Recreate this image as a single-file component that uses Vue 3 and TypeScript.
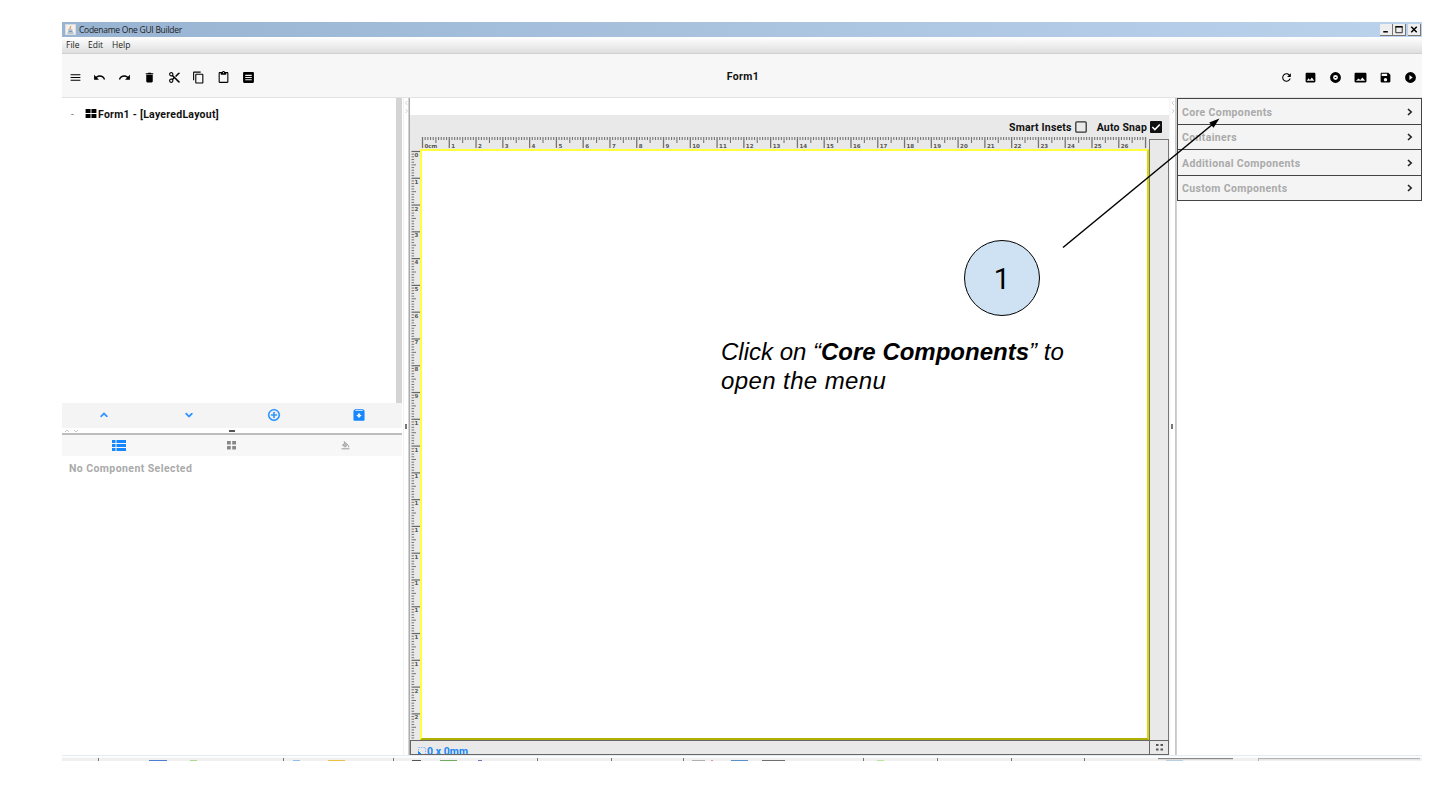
<script setup lang="ts">
interface Tick {
  pos: number
  len: number
  major: boolean
}

const STEP = 26.78

function ticks(limit: number, minor: number, half: number, major: number): Tick[] {
  const list: Tick[] = []
  for (let i = 0; (i * STEP) / 10 <= limit; i++) {
    const len = i % 10 === 0 ? major : i % 5 === 0 ? half : minor
    list.push({ pos: (i * STEP) / 10, len, major: i % 10 === 0 })
  }
  return list
}

const hTicks = ticks(724, 3, 6, 11)
const vTicks = ticks(587, 2.6, 4.5, 8.5)
const hLabels = Array.from({ length: 27 }, (_, i) => ({ x: i * STEP, text: i === 0 ? '0cm' : String(i) }))
const vLabels = Array.from({ length: 22 }, (_, i) => ({ y: i * STEP, text: String(i).charAt(0) }))

const leftIcons: string[] = [
  'M3 18h18v-2H3v2zm0-5h18v-2H3v2zm0-7v2h18V6H3z',
  'M12.5 8c-2.65 0-5.05.99-6.9 2.6L2 7v9h9l-3.62-3.62c1.39-1.16 3.16-1.88 5.12-1.88 3.54 0 6.55 2.31 7.6 5.5l2.37-.78C21.08 11.03 17.15 8 12.5 8z',
  'M18.4 10.6C16.55 8.99 14.15 8 11.5 8c-4.65 0-8.58 3.03-9.96 7.22L3.9 16c1.05-3.19 4.05-5.5 7.6-5.5 1.95 0 3.73.72 5.12 1.88L13 16h9V7l-3.6 3.6z',
  'M6 19c0 1.1.9 2 2 2h8c1.1 0 2-.9 2-2V7H6v12zM19 4h-3.5l-1-1h-5l-1 1H5v2h14V4z',
  'M9.64 7.64c.23-.5.36-1.05.36-1.64 0-2.21-1.79-4-4-4S2 3.79 2 6s1.79 4 4 4c.59 0 1.14-.13 1.64-.36L10 12l-2.36 2.36C7.14 14.13 6.59 14 6 14c-2.21 0-4 1.79-4 4s1.79 4 4 4 4-1.79 4-4c0-.59-.13-1.14-.36-1.64L12 14l7 7h3v-1L9.64 7.64zM6 8c-1.1 0-2-.89-2-2s.9-2 2-2 2 .89 2 2-.9 2-2 2zm0 12c-1.1 0-2-.89-2-2s.9-2 2-2 2 .89 2 2-.9 2-2 2zM19 3l-6 6 2 2 7-7V3z',
  'M16 1H4c-1.1 0-2 .9-2 2v14h2V3h12V1zm3 4H8c-1.1 0-2 .9-2 2v14c0 1.1.9 2 2 2h11c1.1 0 2-.9 2-2V7c0-1.1-.9-2-2-2zm0 16H8V7h11v14z',
  'M19 2h-4.18C14.4.84 13.3 0 12 0c-1.3 0-2.4.84-2.82 2H5c-1.1 0-2 .9-2 2v16c0 1.1.9 2 2 2h14c1.1 0 2-.9 2-2V4c0-1.1-.9-2-2-2zm-7 0c.55 0 1 .45 1 1s-.45 1-1 1-1-.45-1-1 .45-1 1-1zm7 18H5V4h2v3h10V4h2v16z',
  'M4 2h16c1.1 0 2 .9 2 2v16c0 1.1-.9 2-2 2H4c-1.1 0-2-.9-2-2V4c0-1.1.9-2 2-2zm2 5v2h12V7zm0 4v2h12v-2zm0 4v2h12v-2z',
]

const rightIcons: string[] = [
  'M17.65 6.35C16.2 4.9 14.21 4 12 4c-4.42 0-7.99 3.58-7.99 8s3.57 8 7.99 8c3.73 0 6.84-2.55 7.73-6h-2.08c-.82 2.33-3.04 4-5.65 4-3.31 0-6-2.69-6-6s2.69-6 6-6c1.66 0 3.14.69 4.22 1.78L13 11h7V4l-2.35 2.35z',
  'M21 19V5c0-1.1-.9-2-2-2H5c-1.1 0-2 .9-2 2v14c0 1.1.9 2 2 2h14c1.1 0 2-.9 2-2zM8.5 13.5l2.5 3.01L14.5 12l4.5 6H5l3.5-4.5z',
  'M12 2a10 10 0 1 0 0 20 10 10 0 0 0 0-20zm0 5.500a4.500 4.500 0 1 1 0 9 4.500 4.500 0 0 1 0-9zm-1.500 3.700v1.600h3v-1.600z',
  'M23 19V5c0-1.1-.9-2-2-2H3c-1.1 0-2 .9-2 2v14c0 1.1.9 2 2 2h18c1.1 0 2-.9 2-2zM8.5 14l3 2.5L15.500 12l5 6h-17z',
  'M17 3H5c-1.11 0-2 .9-2 2v14c0 1.1.89 2 2 2h14c1.1 0 2-.9 2-2V7l-4-4zm-5 16c-1.66 0-3-1.34-3-3s1.34-3 3-3 3 1.34 3 3-1.34 3-3 3zm3-10H5V5h10v4z',
  'M12 2a10 10 0 1 0 0 20 10 10 0 0 0 0-20zm-2 14.500v-9l6 4.500-6 4.500z',
]

const sections: string[] = ['Core Components', 'Containers', 'Additional Components', 'Custom Components']

interface Mark {
  x: number
  w: number
  color: string
}

const taskMarks: Mark[] = [
  { x: 36, w: 1, color: '#777' },
  { x: 87, w: 18, color: '#4d7fd0' },
  { x: 128, w: 7, color: '#a9dc93' },
  { x: 221, w: 1, color: '#777' },
  { x: 231, w: 7, color: '#92bdf0' },
  { x: 266, w: 17, color: '#ecc04a' },
  { x: 331, w: 1, color: '#777' },
  { x: 350, w: 9, color: '#555' },
  { x: 378, w: 17, color: '#6cae5c' },
  { x: 416, w: 4, color: '#7477aa' },
  { x: 475, w: 1, color: '#777' },
  { x: 549, w: 1, color: '#777' },
  { x: 621, w: 1, color: '#777' },
  { x: 630, w: 13, color: '#b0b0b0' },
  { x: 649, w: 2, color: '#d99' },
  { x: 669, w: 17, color: '#5a8fca' },
  { x: 700, w: 23, color: '#707070' },
  { x: 801, w: 1, color: '#777' },
  { x: 815, w: 7, color: '#b9e39a' },
  { x: 875, w: 1, color: '#777' },
  { x: 949, w: 1, color: '#777' },
  { x: 1022, w: 1, color: '#777' },
]
</script>

<template>
  <div class="page">
    <div class="window">
      <header class="titlebar">
        <svg class="app-icon" viewBox="0 0 11 11">
          <rect x=".5" y=".5" width="10" height="10" fill="#f3f1ec" stroke="#d8dce0" />
          <path d="M5.500 2c1 1-1.500 1.500-.2 3" stroke="#e07a2a" fill="none" />
          <path d="M3 6h4.500M3.500 7.500h4M2.500 9h6" stroke="#5e83a8" fill="none" stroke-width=".8" />
        </svg>
        <span class="title">Codename One GUI Builder</span>
        <div class="win-buttons">
          <span class="win-btn"><svg viewBox="0 0 12 12"><path d="M3 8.500h5" stroke="#000" stroke-width="1.600" /></svg></span>
          <span class="win-btn"><svg viewBox="0 0 12 12"><path d="M2.500 3h7v6.500h-7z" fill="none" stroke="#222" /><path d="M2 3h8" stroke="#000" stroke-width="1.500" /></svg></span>
          <span class="win-btn last"><svg viewBox="0 0 12 12"><path d="M3 3l6 6M9 3l-6 6" stroke="#000" stroke-width="1.600" /></svg></span>
        </div>
      </header>
      <nav class="menubar">
        <span class="m-file">File</span><span class="m-edit">Edit</span><span>Help</span>
      </nav>
      <div class="toolbar">
        <div class="icons">
          <svg v-for="(d, i) in leftIcons" :key="i" viewBox="0 0 24 24"><path :d="d" fill-rule="evenodd" /></svg>
        </div>
        <strong class="form-title">Form1</strong>
        <div class="icons right">
          <svg v-for="(d, i) in rightIcons" :key="i" viewBox="0 0 24 24"><path :d="d" fill-rule="evenodd" /></svg>
        </div>
      </div>

      <main class="body">
        <aside class="left">
          <div class="tree">
            <div class="node">
              <span class="dash">-</span>
              <svg class="grid-icon" viewBox="0 0 12 10"><path d="M0 0h5.500v4.500H0zM6.500 0H12v4.500H6.500zM0 5.500h5.500V10H0zM6.500 5.500H12V10H6.500z" /></svg>
              <span class="node-text">Form1 - [LayeredLayout]</span>
            </div>
            <div class="scroll"></div>
          </div>
          <div class="actions">
            <svg viewBox="0 0 24 24"><path d="M12 8l-6 6 1.410 1.410L12 10.830l4.590 4.580L18 14z" stroke="#1587ff" stroke-width="1.200" /></svg>
            <svg viewBox="0 0 24 24"><path d="M16.590 8.590L12 13.170 7.410 8.590 6 10l6 6 6-6z" stroke="#1587ff" stroke-width="1.200" /></svg>
            <svg viewBox="0 0 24 24"><path d="M13 7h-2v4H7v2h4v4h2v-4h4v-2h-4V7zm-1-5C6.480 2 2 6.480 2 12s4.480 10 10 10 10-4.480 10-10S17.520 2 12 2zm0 18c-4.410 0-8-3.590-8-8s3.590-8 8-8 8 3.590 8 8-3.590 8-8 8z" stroke="#1587ff" stroke-width=".5" /></svg>
            <svg viewBox="0 0 24 24"><path fill-rule="evenodd" d="M5 2h14l2.500 2.500V20c0 1.100-.9 2-2 2h-15c-1.100 0-2-.9-2-2V4.500zM5.500 4v1h13V4zM10 9.500v2.700H7.200l4.800 5 4.800-5H14V9.500z" /></svg>
          </div>
          <div class="split">
            <svg viewBox="0 0 340 7">
              <path d="M3 4l2-2 2 2M12 2l2 2 2-2" fill="none" stroke="#bbb" stroke-width=".8" />
              <rect x="167" y="2" width="6" height="2" fill="#555" />
              <rect x="0" y="5" width="340" height="2" fill="#bdbdbd" />
            </svg>
          </div>
          <div class="tabs">
            <svg class="t-list" viewBox="0 0 14 11"><path d="M0 0h3.500v3H0zM4.500 0H14v3H4.500zM0 4h3.500v3H0zM4.500 4H14v3H4.500zM0 8h3.500v3H0zM4.500 8H14v3H4.500z" fill="#1587ff" /></svg>
            <svg class="t-grid" viewBox="0 0 9 9"><path d="M0 0h3.800v3.500H0zM5.200 0H9v3.500H5.200zM0 5h3.800v3.500H0zM5.200 5H9v3.500H5.200z" fill="#888" /></svg>
            <svg class="t-fill" viewBox="0 0 9 9"><path d="M3 .5l3.800 3.300-2.800 2.400-2.600-2.200L4 1.900z" fill="#bbb" stroke="#999" stroke-width=".8" /><path d="M7.600 4.500v1.800M.5 7.800h8" stroke="#999" /></svg>
          </div>
          <div class="props">No Component Selected</div>
        </aside>

        <div class="gutter">
          <svg viewBox="0 0 8 657">
            <path d="M5.500 3L3.500 5l2 2M3.500 11l2 2-2 2" fill="none" stroke="#c4c4c4" stroke-width=".8" />
            <path d="M1.500 0v657" stroke="#f1f1f1" />
            <rect x="3" y="326" width="2" height="5" fill="#777" />
            <rect x="6.500" y="0" width="1.500" height="657" fill="#aaa" />
          </svg>
        </div>

        <section class="center">
          <div class="blank"></div>
          <div class="options">
            <span>Smart Insets</span>
            <svg class="box" viewBox="0 0 12 12"><rect x=".8" y=".8" width="10.400" height="10.400" rx="1" fill="none" stroke="#333" stroke-width="1.300" /></svg>
            <span class="snap">Auto Snap</span>
            <svg class="box" viewBox="0 0 12 12"><rect width="12" height="12" rx="1" fill="#111" /><path d="M2.300 6l2.600 2.600L9.800 3.500" fill="none" stroke="#fff" stroke-width="1.500" /></svg>
          </div>
          <div class="work">
            <svg class="h-ruler" viewBox="0 0 738 12">
              <g transform="translate(12.500 0)" stroke="#747474">
                <line v-for="(t, i) in hTicks" :key="i" :x1="t.pos" :x2="t.pos" y1="0" :y2="t.len" :stroke-width="t.major ? 1.3 : 1.1" />
              </g>
              <text v-for="l in hLabels" :key="l.text" :x="l.x + 14.5" y="10.800">{{ l.text }}</text>
            </svg>
            <svg class="v-ruler" viewBox="0 0 10 592">
              <g transform="translate(1.500 2.500)" stroke="#666">
                <line v-for="(t, i) in vTicks" :key="i" x1="0" :x2="t.len" :y1="t.pos" :y2="t.pos" :stroke-width="t.major ? 1.2 : 0.9" />
              </g>
              <text v-for="l in vLabels" :key="l.y" x="4.600" :y="l.y + 8">{{ l.text }}</text>
            </svg>
            <div class="canvas"></div>
            <div class="track-v"></div>
            <div class="track-h">
              <svg viewBox="0 0 8 8"><rect x=".5" y=".5" width="7" height="7" fill="none" stroke="#8abaf0" stroke-dasharray="1.500 1" /><path d="M.5 7.500V4.500l3 3z" fill="#1b86f5" stroke="#1b86f5" /></svg>
              <span>0 x 0mm</span>
            </div>
            <div class="corner">
              <svg viewBox="0 0 7 7"><path d="M0 0h2.500v2H0zM4.500 0H7v2H4.500zM0 4.500h2.500v2H0zM4.500 4.500H7v2H4.500z" fill="#555" /></svg>
            </div>
          </div>
        </section>

        <div class="gutter">
          <svg viewBox="0 0 8 657">
            <path d="M5 3L3 5l2 2M3 11l2 2-2 2" fill="none" stroke="#c4c4c4" stroke-width=".8" />
            <path d="M.8 0v657" stroke="#f1f1f1" />
            <rect x="2" y="326" width="2" height="5" fill="#777" />
            <rect x="6" y="0" width="1.800" height="657" fill="#c8c8c8" />
          </svg>
        </div>

        <aside class="palette">
          <div v-for="s in sections" :key="s" class="section">
            <span>{{ s }}</span>
            <svg viewBox="0 0 6 8"><path d="M1 1l3.200 3L1 7" fill="none" stroke="#222" stroke-width="1.600" /></svg>
          </div>
        </aside>
      </main>

      <footer class="taskbar">
        <svg viewBox="0 0 1360 6">
          <rect width="1360" height="6" fill="#f0f0f0" />
          <rect width="1360" height="3" fill="#fbfcfd" />
          <rect width="1360" height=".8" fill="#e4e8ec" />
          <rect v-for="m in taskMarks" :key="m.x" :x="m.x" :y="m.w === 1 ? 3 : 5" :width="m.w" :height="m.w === 1 ? 3 : 1" :fill="m.color" />
          <rect x="1096" y="3" width="75" height="1.200" fill="#888" />
          <rect x="1104" y="5" width="17" height="1" fill="#b4cfe6" />
          <rect x="1196" y="3" width="162" height="1.200" fill="#b5b5b5" />
          <rect x="1196" y="3" width="1" height="3" fill="#b5b5b5" />
        </svg>
      </footer>
    </div>

    <div class="overlay">
      <svg class="arrow" viewBox="0 0 1434 790">
        <path d="M1063 247.500L1213 124" stroke="#000" stroke-width="1.500" />
        <path d="M1219.500 118.500l-6 9.200-4.300-5.200z" />
      </svg>
      <div class="bubble">1</div>
      <p class="note">Click on “<b>Core Components</b>” to<br /><span class="second">open the menu</span></p>
    </div>
  </div>
</template>

<style>
body {
  background: #fff;
}
</style>

<style scoped>
.page {
  position: relative;
  box-sizing: border-box;
  width: 1434px;
  height: 790px;
  padding: 22px 0 0 62px;
  overflow: hidden;
  background: #fff;
  font-family: Roboto, 'Liberation Sans', sans-serif;
}
svg {
  display: block;
  flex: none;
}
.window {
  width: 1360px;
  height: 739px;
  display: flex;
  flex-direction: column;
}
.titlebar {
  height: 15px;
  flex: none;
  display: flex;
  align-items: center;
  background: linear-gradient(90deg, #98b4d2, #bbd2ec);
  padding-left: 3px;
}
.app-icon {
  width: 11px;
  height: 11px;
}
.title {
  margin-left: 3px;
  font: 8.500px/15px 'Open Sans', sans-serif;
  letter-spacing: -0.270px;
  color: #222;
  white-space: nowrap;
}
.win-buttons {
  margin-left: auto;
  display: flex;
}
.win-btn {
  width: 13px;
  height: 12px;
  box-sizing: border-box;
  background: #eee;
  border-right: 1px solid #777;
  border-bottom: 1px solid #777;
}
.win-btn svg {
  width: 12px;
  height: 11px;
}
.win-btn.last {
  margin: 0 1px 0 2px;
}
.menubar {
  height: 17px;
  flex: none;
  box-sizing: border-box;
  display: flex;
  padding-left: 4px;
  font: 8.500px/16px 'Open Sans', sans-serif;
  color: #222;
  background: linear-gradient(#fff, #dedede);
  border-bottom: 1px solid #d0d0d0;
}
.m-file {
  width: 22px;
}
.m-edit {
  width: 24px;
}
.toolbar {
  height: 44px;
  flex: none;
  box-sizing: border-box;
  display: grid;
  grid-template-columns: 600px 1fr 600px;
  align-items: center;
  background: #f7f7f7;
  border-bottom: 1px solid #e2e2e2;
}
.icons {
  display: flex;
  gap: 11.800px;
  padding: 3px 0 0 6.500px;
}
.icons svg {
  width: 13px;
  height: 13px;
}
.icons.right {
  justify-content: flex-end;
  padding: 3px 5.500px 0 0;
}
.form-title {
  padding: 2px 0 0 2px;
  text-align: center;
  font-size: 10.500px;
  letter-spacing: 0.400px;
  color: #111;
}
.body {
  height: 657px;
  flex: none;
  display: flex;
}
.left {
  width: 340px;
  display: flex;
  flex-direction: column;
}
.tree {
  height: 305px;
  display: flex;
  justify-content: space-between;
}
.node {
  display: flex;
  align-items: center;
  height: 33px;
  padding-left: 9px;
}
.dash {
  width: 14px;
  font-size: 10px;
  color: #777;
}
.grid-icon {
  width: 12px;
  height: 9px;
  margin-top: -3px;
}
.node-text {
  margin-left: 1px;
  font-size: 10.500px;
  font-weight: 700;
  letter-spacing: 0.260px;
  color: #111;
  white-space: nowrap;
}
.scroll {
  width: 6px;
  background: #d4d4d4;
}
.actions {
  height: 25px;
  box-sizing: border-box;
  padding: 0 1px 1px 0;
  display: grid;
  grid-template-columns: repeat(4, 1fr);
  align-items: center;
  justify-items: center;
  background: #f4f4f4;
  fill: #1587ff;
}
.actions svg {
  width: 14px;
  height: 14px;
}
.split {
  height: 7px;
}
.split svg {
  width: 340px;
  height: 7px;
}
.tabs {
  height: 21px;
  display: grid;
  grid-template-columns: repeat(3, 1fr);
  align-items: center;
  justify-items: center;
  background: #f7f7f7;
}
.t-list {
  width: 14px;
  height: 11px;
}
.t-grid,
.t-fill {
  width: 9px;
  height: 9px;
}
.props {
  padding: 7px 0 0 7px;
  font-size: 10.500px;
  line-height: 12px;
  font-weight: 700;
  letter-spacing: 0.420px;
  color: #aaa;
}
.gutter {
  width: 8px;
  flex: none;
}
.gutter svg {
  width: 8px;
  height: 657px;
}
.center {
  width: 759px;
  flex: none;
  background: #e9e9e9;
  display: flex;
  flex-direction: column;
}
.blank {
  height: 17px;
  background: #fff;
}
.options {
  height: 22px;
  display: flex;
  justify-content: flex-end;
  align-items: center;
  padding-right: 7px;
  padding-top: 2px;
  box-sizing: border-box;
  font-size: 10.500px;
  font-weight: 700;
  letter-spacing: 0.180px;
  color: #111;
}
.box {
  width: 12px;
  height: 12px;
  margin-left: 3px;
}
.snap {
  margin-left: 10px;
}
.work {
  flex: 1;
  display: grid;
  grid-template-columns: 10px 729px 20px;
  grid-template-rows: 12px 591px 15px;
}
.h-ruler {
  grid-area: 1 / 1 / 2 / 3;
  width: 738px;
  height: 12px;
}
.v-ruler {
  grid-area: 2 / 1 / 3 / 2;
  width: 10px;
  height: 592px;
}
.h-ruler text,
.v-ruler text {
  font-family: 'DejaVu Sans', sans-serif;
  font-weight: 700;
  font-size: 5.500px;
  fill: #555;
}
.canvas {
  grid-area: 2 / 2 / 3 / 3;
  box-sizing: border-box;
  background: #fff;
  border: 2px solid #ffff3c;
  border-right-color: #d8d800;
  border-bottom-color: #b0b000;
}
.track-v {
  grid-area: 1 / 3 / 3 / 4;
  margin-top: 2px;
  border: 1px solid #777;
  border-bottom: none;
}
.track-h {
  grid-area: 3 / 1 / 4 / 3;
  box-sizing: border-box;
  display: flex;
  align-items: flex-start;
  padding: 5px 0 0 7px;
  border: 1px solid #666;
  border-right: none;
  overflow: hidden;
  color: #1b86f5;
  font-size: 10.500px;
  line-height: 12px;
  font-weight: 700;
  letter-spacing: 0.050px;
}
.track-h svg {
  width: 8px;
  height: 8px;
  margin: 1px 1px 0 0;
}
.corner {
  grid-area: 3 / 3 / 4 / 4;
  box-sizing: border-box;
  border: 1px solid #666;
  display: grid;
  place-items: center;
}
.corner svg {
  width: 7px;
  height: 7px;
}
.palette {
  flex: 1;
}
.section {
  height: 25.500px;
  box-sizing: border-box;
  display: flex;
  align-items: center;
  justify-content: space-between;
  padding: 2px 8px 0 4px;
  background: #f4f4f4;
  border: 1px solid #444;
  border-bottom-width: 0;
  font-size: 10.500px;
  font-weight: 700;
  letter-spacing: 0.360px;
  color: #aaa;
}
.section:last-child {
  height: 26.500px;
  border-bottom-width: 1px;
}
.section svg {
  width: 6px;
  height: 8px;
  margin-top: -1px;
}
.taskbar svg {
  width: 1360px;
  height: 6px;
}
.overlay {
  position: absolute;
  inset: 0;
}
.arrow {
  position: absolute;
  inset: 0;
  width: 1434px;
  height: 790px;
}
.bubble {
  position: absolute;
  left: 964px;
  top: 240px;
  width: 76px;
  height: 76px;
  box-sizing: border-box;
  border: 1.200px solid #000;
  border-radius: 50%;
  background: #cfe2f3;
  text-align: center;
  font: 29px/76px Roboto, sans-serif;
}
.note {
  position: absolute;
  left: 721px;
  top: 338px;
  margin: 0;
  white-space: nowrap;
  font: italic 24px/28.500px 'Liberation Sans', Arial, sans-serif;
  color: #000;
}
.second {
  letter-spacing: 0.400px;
}
</style>
